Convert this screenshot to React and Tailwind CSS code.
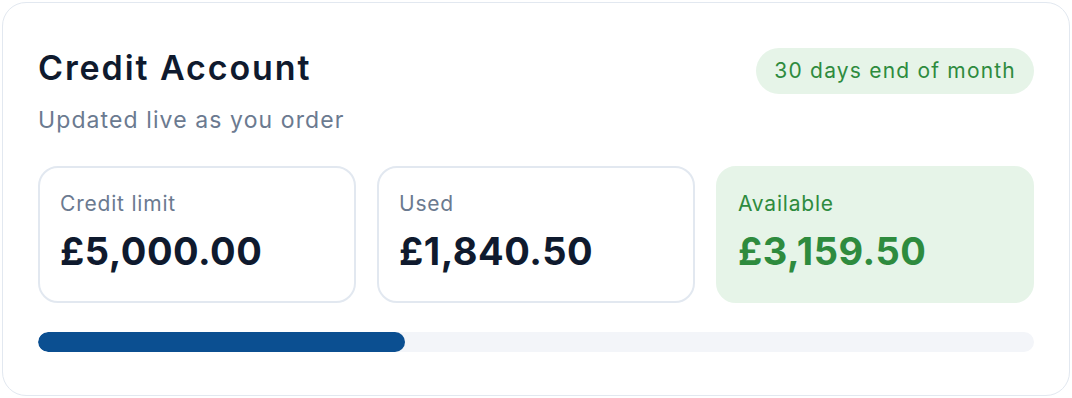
import React from 'react';

const stats = [
  { label: 'Credit limit', value: '£5,000.00', tone: 'plain' },
  { label: 'Used', value: '£1,840.50', tone: 'plain' },
  { label: 'Available', value: '£3,159.50', tone: 'good' },
];

const StatCard = ({ label, value, tone }) => {
  const good = tone === 'good';
  return (
    <div
      className={
        good
          ? 'rounded-[20px] border-2 border-[#e6f4e8] bg-[#e6f4e8] h-[137px] pl-[20px] pt-[22px]'
          : 'rounded-[20px] border-2 border-[#e2e8f0] bg-white h-[137px] pl-[20px] pt-[22px]'
      }
    >
      <div
        className={
          good
            ? 'text-[21px] leading-[28px] tracking-[0.8px] text-[#2e8b3e]'
            : 'text-[21px] leading-[28px] tracking-[0.8px] text-[#6b7a90]'
        }
      >
        {label}
      </div>
      <div
        className={
          good
            ? 'mt-[10px] text-[38px] leading-[46px] font-bold tracking-[0.5px] text-[#2e8b3e]'
            : 'mt-[10px] text-[38px] leading-[46px] font-bold tracking-[0.5px] text-[#0f1a2e]'
        }
      >
        {value}
      </div>
    </div>
  );
};

export default function App() {
  const limit = 5000;
  const used = 1840.5;
  const pct = (used / limit) * 100;

  return (
    <div className="w-[1072px] h-[398px] bg-white p-[2px] font-['Inter','Noto_Sans',sans-serif]">
      <div className="h-[394px] rounded-[24px] border border-[#e2e8f0] bg-white px-[35px] pt-[45px]">
        <div className="flex items-start justify-between">
          <div>
            <h2 className="text-[34px] leading-[40px] font-semibold tracking-[1.9px] text-[#0f1a2e]">
              Credit Account
            </h2>
            <p className="mt-[17px] text-[23px] leading-[30px] tracking-[1.1px] text-[#6b7a90]">
              Updated live as you order
            </p>
          </div>
          <span className="h-[46px] flex items-center rounded-full bg-[#e6f4e8] px-[18px] text-[21px] tracking-[1.2px] text-[#2e8b3e]">
            30 days end of month
          </span>
        </div>

        <div className="mt-[31px] grid grid-cols-3 gap-[21px]">
          {stats.map(s => (
            <StatCard key={s.label} {...s} />
          ))}
        </div>

        <div className="mt-[29px] h-[20px] rounded-full bg-[#f3f5f9] overflow-hidden">
          <div className="h-full rounded-full bg-[#0b4f91]" style={{ width: `${pct}%` }} />
        </div>
      </div>
    </div>
  );
}
